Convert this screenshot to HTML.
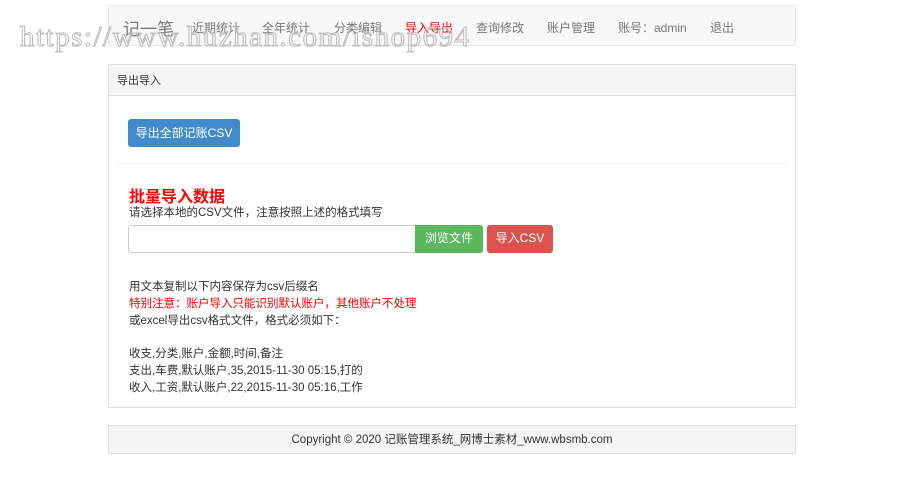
<!DOCTYPE html>
<html><head><meta charset="utf-8"><style>
*{box-sizing:border-box;margin:0;padding:0}
body{width:900px;height:497px;background:#fff;font-family:"Liberation Sans","Noto Sans CJK SC",sans-serif;font-size:12px;color:#333;position:relative;overflow:hidden}
.nav{position:absolute;left:108px;top:5px;width:688px;height:41px;background:#f8f8f8;border:1px solid #e7e7e7;border-radius:3px}
.nav span{position:absolute;top:13px;font-size:12px;color:#777}
.brand{font-size:17px!important;top:9px!important}
.wm{position:absolute;left:20px;top:21px;font-family:"Liberation Serif",serif;font-size:29px;color:transparent;-webkit-text-stroke:1px #bbb;letter-spacing:1.5px;white-space:nowrap}
.panel{position:absolute;left:108px;top:64px;width:688px;height:344px;border:1px solid #ddd;border-radius:2px}
.ph{height:31px;background:#f5f5f5;border-bottom:1px solid #ddd;padding:7px 8px;font-size:11px}
.btn{position:absolute;color:#fff;font-size:12px;text-align:center;border-radius:3px}
.t{position:absolute;left:20px;font-size:11.5px;white-space:nowrap}
.foot{position:absolute;left:108px;top:425px;width:688px;height:29px;background:#f5f5f5;border:1px solid #ddd;text-align:center;line-height:28px;font-size:11.5px}
</style></head><body>
<div class="nav">
<span class="brand" style="left:14px">记一笔</span>
<span style="left:83px">近期统计</span>
<span style="left:153px">全年统计</span>
<span style="left:225px">分类编辑</span>
<span style="left:296px;color:#f00">导入导出</span>
<span style="left:367px">查询修改</span>
<span style="left:438px">账户管理</span>
<span style="left:509px">账号：admin</span>
<span style="left:601px">退出</span>
</div>
<div class="wm">https://www.huzhan.com/ishop694</div>
<div class="panel">
<div class="ph">导出导入</div>
<div class="btn" style="left:19px;top:54px;width:112px;height:28px;line-height:28px;background:#428bca">导出全部记账CSV</div>
<div style="position:absolute;left:8px;right:8px;top:98px;border-top:1px solid #eee"></div>
<div class="t" style="top:118px;font-size:16px;font-weight:bold;color:#f00">批量导入数据</div>
<div class="t" style="top:139px">请选择本地的CSV文件，注意按照上述的格式填写</div>
<div style="position:absolute;left:19px;top:160px;width:288px;height:28px;border:1px solid #ccc;border-radius:3px 0 0 3px"></div>
<div class="btn" style="left:306px;top:160px;width:68px;height:28px;line-height:27px;background:#5cb85c;border-radius:0 3px 3px 0">浏览文件</div>
<div class="btn" style="left:378px;top:160px;width:66px;height:28px;line-height:27px;background:#d9534f">导入CSV</div>
<div class="t" style="top:213px">用文本复制以下内容保存为csv后缀名</div>
<div class="t" style="top:230px;color:#f00">特别注意：账户导入只能识别默认账户，其他账户不处理</div>
<div class="t" style="top:247px">或excel导出csv格式文件，格式必须如下：</div>
<div class="t" style="top:280px">收支,分类,账户,金额,时间,备注</div>
<div class="t" style="top:297px">支出,车费,默认账户,35,2015-11-30 05:15,打的</div>
<div class="t" style="top:314px">收入,工资,默认账户,22,2015-11-30 05:16,工作</div>
</div>
<div class="foot">Copyright © 2020 记账管理系统_网博士素材_www.wbsmb.com</div>
</body></html>
